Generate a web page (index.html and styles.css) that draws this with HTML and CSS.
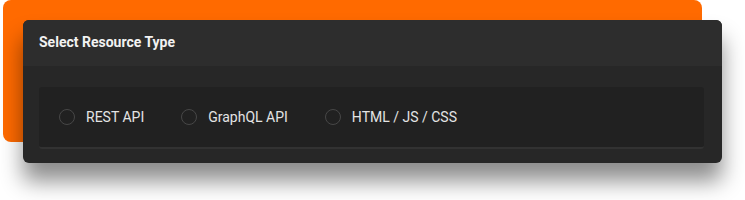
FILE: index.html
```html
<!DOCTYPE html>
<html lang="en">
<head>
    <meta charset="UTF-8">
    <title>Select Resource Type</title>
    <link rel="stylesheet" href="styles.css">
</head>
<body>
    <div class="backdrop"></div>

    <div class="card">
        <div class="card-header">Select Resource Type</div>
        <div class="card-body">
            <div class="options">
                <label class="option"><span class="radio"></span>REST API</label>
                <label class="option"><span class="radio"></span>GraphQL API</label>
                <label class="option"><span class="radio"></span>HTML / JS / CSS</label>
            </div>
        </div>
    </div>
</body>
</html>
```
FILE: styles.css
```css
html, body {
    height: 100%;
}

body {
    margin: 0;
    min-height: 200px;
    background: #ffffff;
    font-family: Roboto, 'Liberation Sans', sans-serif;
}

.backdrop {
    width: 699px;
    height: 142px;
    margin-left: 3px;
    background: #ff6a00;
    border-radius: 8px;
}

.card {
    position: relative;
    width: 699px;
    margin: -122px 0 0 23px;
    background: #272727;
    border-radius: 6px;
    box-shadow: 0 18px 22px rgba(0,0,0,0.45);
}

.card-header {
    height: 43px;
    padding: 0 16px 3px;
    display: flex;
    align-items: center;
    background: #2d2d2d;
    border-radius: 6px 6px 0 0;
    color: #f2f2f2;
    font-size: 14px;
    font-weight: 700;
}

.card-body {
    padding: 21px 18px 14px 16px;
}

.options {
    height: 60px;
    display: flex;
    align-items: center;
    gap: 37px;
    padding-left: 20px;
    background: #212121;
    border-radius: 3px;
    border-bottom: 2px solid #323232;
}

.option {
    display: flex;
    align-items: center;
    gap: 11px;
    color: #e4e4e4;
    font-size: 14px;
}

.radio {
    width: 14px;
    height: 14px;
    border: 1px solid #474747;
    border-radius: 50%;
}
```
